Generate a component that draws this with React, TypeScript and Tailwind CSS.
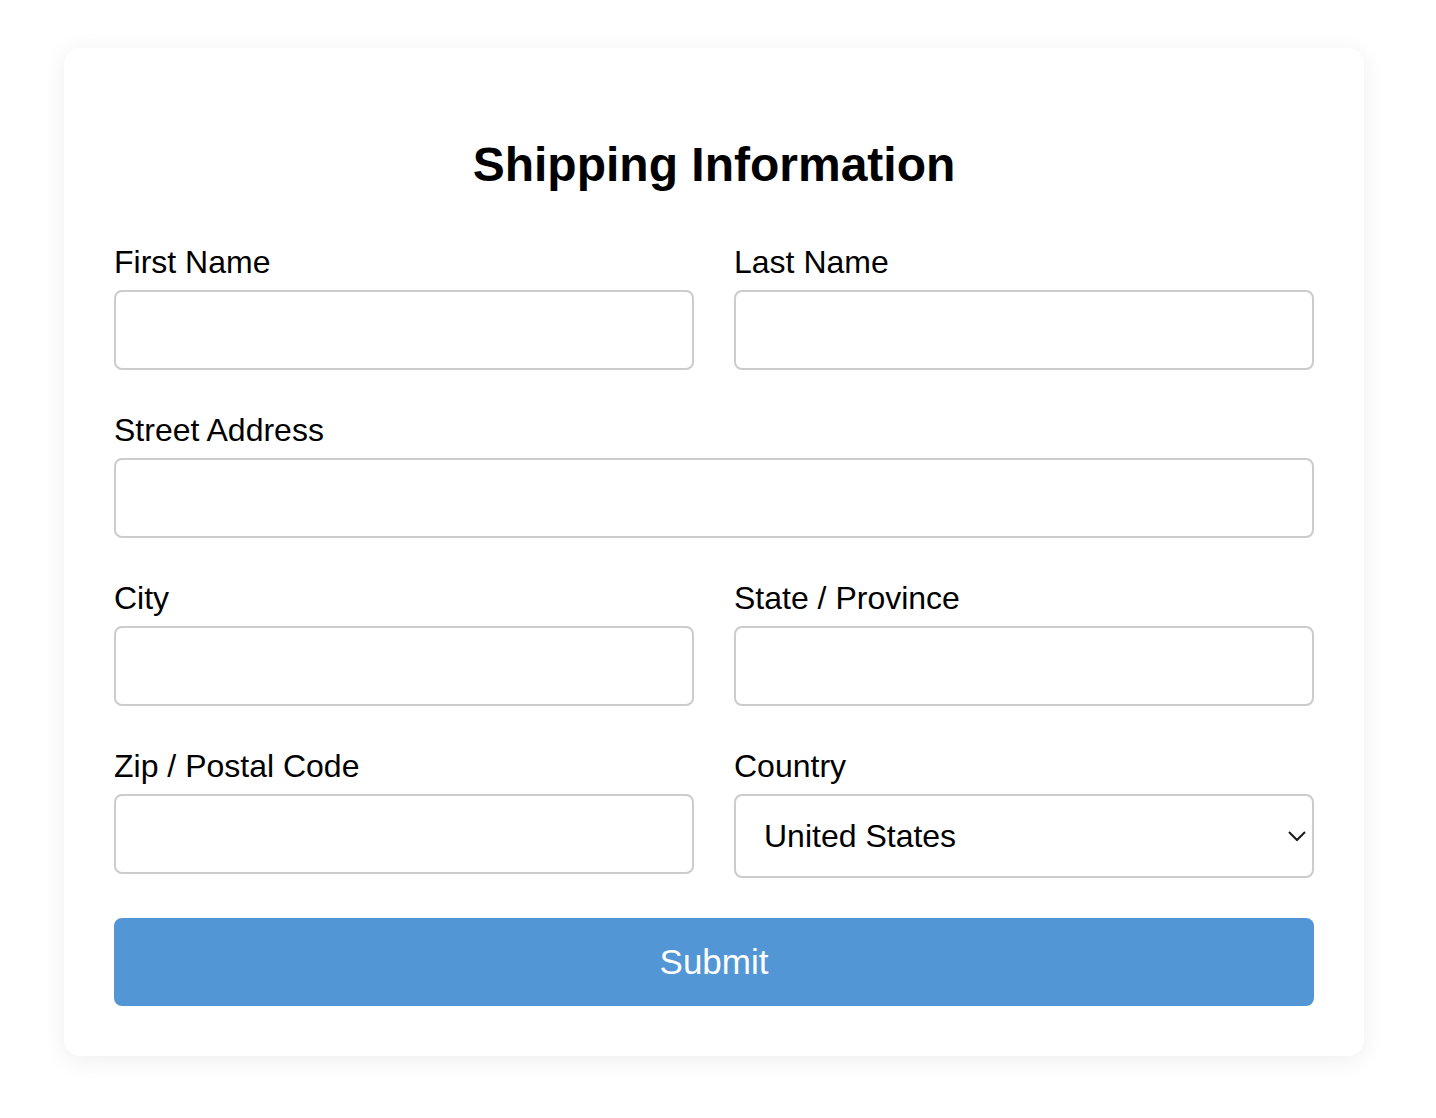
import React from 'react';

const Field = ({ label, className = '' }: { label: string; className?: string }) => (
    <div className={className}>
        <label className="block text-[32px] leading-[39px] mb-[8px] text-black">{label}</label>
        <input
            type="text"
            className="block w-full h-[80px] border-2 border-[#cccccc] rounded-[8px] px-[20px] text-[32px] outline-none bg-white"
        />
    </div>
);

export default function App() {
    return (
        <div
            className="min-h-screen bg-white pt-[48px] pl-[64px]"
            style={{ fontFamily: '"Liberation Sans", Arial, sans-serif' }}
        >
            <div className="w-[1300px] rounded-2xl bg-white px-[50px] pt-[89px] pb-[50px] shadow-[0_4px_24px_rgba(0,0,0,0.07)]">
                <h2 className="text-center text-[48px] font-bold leading-[55px] mb-[51px] text-black">
                    Shipping Information
                </h2>

                <form>
                    <div className="grid grid-cols-2 gap-x-[40px] gap-y-[41px] items-start">
                        <Field label="First Name" />
                        <Field label="Last Name" />
                        <Field label="Street Address" className="col-span-2" />
                        <Field label="City" />
                        <Field label="State / Province" />
                        <Field label="Zip / Postal Code" />

                        <div>
                            <label className="block text-[32px] leading-[39px] mb-[8px] text-black">Country</label>
                            <div className="relative">
                                <select
                                    defaultValue="United States"
                                    className="block w-full h-[84px] appearance-none border-2 border-[#cccccc] rounded-[8px] pl-[28px] pr-[40px] text-[32px] text-black bg-white outline-none"
                                >
                                    <option>United States</option>
                                    <option>Canada</option>
                                    <option>Mexico</option>
                                </select>
                                <svg
                                    className="absolute right-[8px] top-1/2 -translate-y-1/2 pointer-events-none"
                                    width="18"
                                    height="11"
                                    viewBox="0 0 18 11"
                                    fill="none"
                                >
                                    <polyline points="1,1.5 9,9.5 17,1.5" stroke="#1a1a1a" strokeWidth="2" />
                                </svg>
                            </div>
                        </div>
                    </div>

                    <button
                        type="button"
                        className="block mt-[40px] w-full h-[88px] rounded-[8px] bg-[#5296d5] text-white text-[35px]"
                    >
                        Submit
                    </button>
                </form>
            </div>
        </div>
    );
}
